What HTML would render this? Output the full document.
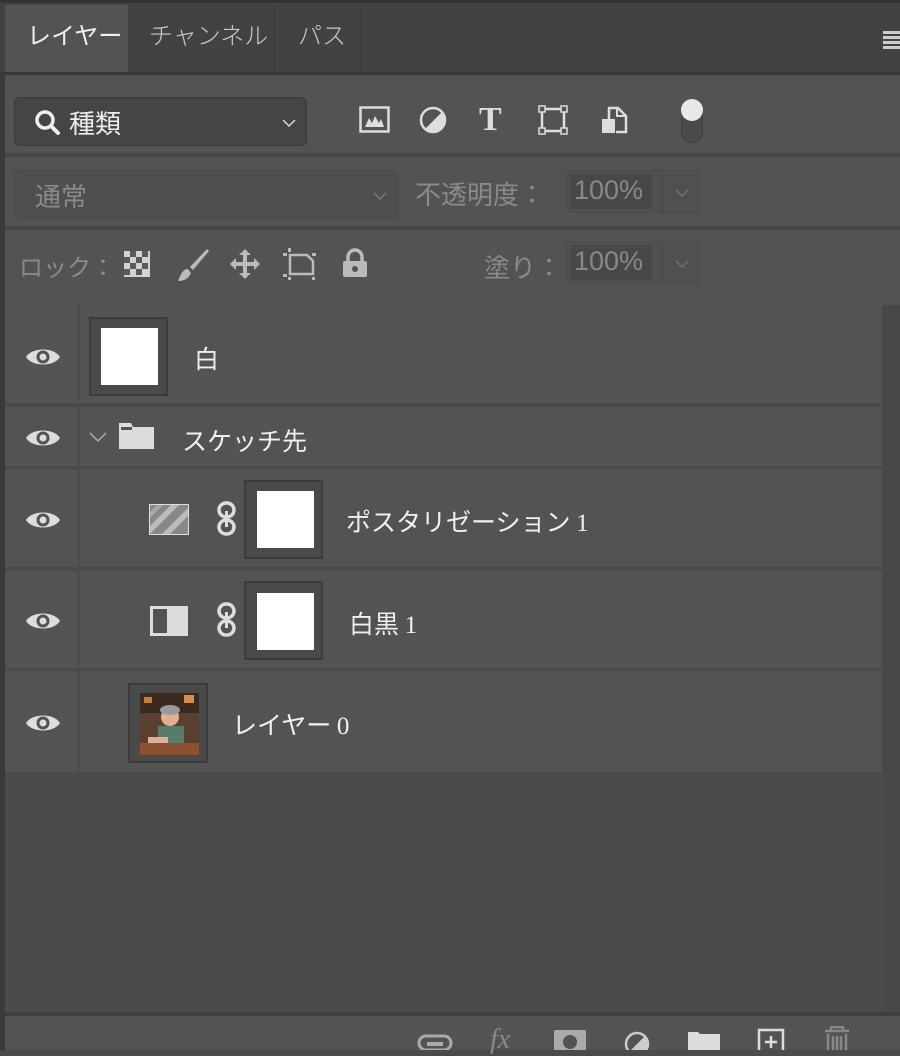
<!DOCTYPE html>
<html><head><meta charset="utf-8">
<style>
*{margin:0;padding:0;box-sizing:border-box}
body{width:900px;height:1050px;background:#4b4b4b;overflow:hidden;position:relative;font-family:"Liberation Sans","Noto Sans CJK JP",sans-serif;}
.a{position:absolute}
.jp{font-family:"Noto Sans CJK JP","Liberation Sans",sans-serif}
</style></head><body>
<div class="a" style="left:0;top:0;width:5px;height:1050px;background:#3a3a3a"></div>
<div class="a" style="left:0;top:0;width:900px;height:73px;background:#424242;border-top:3px solid #333"></div>
<div class="a" style="left:5px;top:5px;width:123px;height:70px;background:#535353"></div>
<div class="a jp" style="left:27px;top:16px;font-size:24px;color:#f0f0f0;font-weight:400">レイヤー</div>
<div class="a jp" style="left:149px;top:16px;font-size:24px;color:#c8c8c8;font-weight:300">チャンネル</div>
<div class="a" style="left:274px;top:5px;width:1px;height:67px;background:#383838"></div>
<div class="a jp" style="left:298px;top:16px;font-size:24px;color:#c8c8c8;font-weight:300">パス</div>
<div class="a" style="left:360px;top:5px;width:1px;height:67px;background:#383838"></div>
<div class="a" style="left:883px;top:31px;width:17px;height:3px;background:#ccc;box-shadow:0 5px 0 #ccc,0 10px 0 #ccc,0 15px 0 #ccc"></div>
<div class="a" style="left:0;top:72px;width:900px;height:3px;background:#383838"></div>
<div class="a" style="left:5px;top:75px;width:895px;height:78px;background:#535353"></div>
<div class="a" style="left:14px;top:97px;width:293px;height:49px;background:#454545;border:1px solid #3c3c3c;border-radius:5px"></div>
<svg class="a" style="left:33px;top:108px" width="30" height="30" viewBox="0 0 30 30"><circle cx="12" cy="12" r="8" fill="none" stroke="#eee" stroke-width="3.5"/><path d="M18 18l7 7" stroke="#eee" stroke-width="4" stroke-linecap="round"/></svg>
<div class="a jp" style="left:69px;top:104px;font-size:26px;color:#eee">種類</div>
<svg class="a" style="left:281px;top:118px" width="16" height="10"><path d="M2 2l6 6 6-6" fill="none" stroke="#ddd" stroke-width="1.5"/></svg>
<svg class="a" style="left:359px;top:106px" width="32" height="28"><rect x="1.5" y="1.5" width="28" height="24" fill="none" stroke="#ddd" stroke-width="2.5"/><path d="M6 21l4-9 3 5 3-7 4 7 2-4 3 8z" fill="#ddd"/></svg>
<svg class="a" style="left:419px;top:106px" width="28" height="28"><circle cx="14" cy="14" r="12" fill="none" stroke="#ddd" stroke-width="2.5"/><path d="M23 6A12 12 0 0 1 6 23z" fill="#ddd"/></svg>
<div class="a" style="left:479px;top:101px;font-family:'Liberation Serif',serif;font-weight:bold;font-size:34px;color:#ddd">T</div>
<svg class="a" style="left:538px;top:105px" width="30" height="30"><rect x="4" y="4" width="22" height="22" fill="none" stroke="#ddd" stroke-width="2.5"/><g fill="#535353" stroke="#ddd" stroke-width="1.5"><rect x="1" y="1" width="6" height="6"/><rect x="23" y="1" width="6" height="6"/><rect x="1" y="23" width="6" height="6"/><rect x="23" y="23" width="6" height="6"/></g></svg>
<svg class="a" style="left:600px;top:105px" width="30" height="30"><path d="M9 15V3h9l8 8v16H16" fill="none" stroke="#ddd" stroke-width="2.5"/><path d="M17 3v8h8" fill="none" stroke="#ddd" stroke-width="2"/><rect x="2" y="14" width="13" height="14" fill="#ddd"/></svg>
<div class="a" style="left:681px;top:100px;width:22px;height:43px;border:1px solid #3d3d3d;border-radius:11px;background:#4a4a4a"></div>
<div class="a" style="left:681px;top:99px;width:22px;height:22px;border-radius:50%;background:#e8e8e8"></div>
<div class="a" style="left:5px;top:153px;width:895px;height:4px;background:#464646"></div>
<div class="a" style="left:5px;top:157px;width:895px;height:69px;background:#535353"></div>
<div class="a" style="left:14px;top:170px;width:384px;height:49px;background:#4f4f4f;border:1px solid #4a4a4a;border-radius:5px"></div>
<div class="a jp" style="left:35px;top:177px;font-size:26px;color:#8a8a8a">通常</div>
<svg class="a" style="left:372px;top:191px" width="16" height="10"><path d="M2 2l6 6 6-6" fill="none" stroke="#777" stroke-width="1.5"/></svg>
<div class="a jp" style="left:415px;top:175px;font-size:26px;color:#8a8a8a">不透明度：</div>
<div class="a" style="left:567px;top:170px;width:132px;height:43px;border:1px solid #4a4a4a;border-radius:4px;background:#505050"></div>
<div class="a" style="left:571px;top:174px;width:81px;height:35px;background:#484848"></div>
<div class="a" style="left:662px;top:171px;width:1px;height:44px;background:#484848"></div>
<div class="a" style="left:574px;top:175px;font-size:27px;color:#888">100%</div>
<svg class="a" style="left:674px;top:188px" width="16" height="10"><path d="M2 2l6 6 6-6" fill="none" stroke="#707070" stroke-width="1.5"/></svg>
<div class="a" style="left:5px;top:226px;width:895px;height:4px;background:#464646"></div>
<div class="a" style="left:5px;top:230px;width:895px;height:75px;background:#535353"></div>
<div class="a jp" style="left:19px;top:248px;font-size:24px;color:#8a8a8a">ロック：</div>
<svg class="a" style="left:123px;top:250px" width="28" height="28"><rect x="1" y="1" width="26" height="26" fill="#e0e0e0" opacity=".9"/><g fill="#5a5a5a"><rect x="7" y="1" width="6" height="6"/><rect x="19" y="1" width="6" height="6"/><rect x="1" y="7" width="6" height="6"/><rect x="13" y="7" width="6" height="6"/><rect x="7" y="13" width="6" height="6"/><rect x="19" y="13" width="6" height="6"/><rect x="1" y="19" width="6" height="6"/><rect x="13" y="19" width="6" height="6"/></g></svg>
<svg class="a" style="left:176px;top:247px" width="34" height="36"><path d="M31 2L14 20l3 3L33 4z" fill="#bbb"/><path d="M12 22c-5 0-7 5-10 12 7 0 11-3 13-8z" fill="#bbb"/></svg>
<svg class="a" style="left:228px;top:247px" width="34" height="34"><path d="M17 2l6 6h-4v7h7v-4l6 6-6 6v-4h-7v7h4l-6 6-6-6h4v-7H8v4l-6-6 6-6v4h7V8h-4z" fill="#bbb"/></svg>
<svg class="a" style="left:282px;top:247px" width="36" height="34"><path d="M8 8h17l6 6v13H8z" fill="none" stroke="#bbb" stroke-width="2.5"/><g fill="#bbb"><rect x="1" y="6" width="4" height="3"/><rect x="6" y="1" width="3" height="4"/><rect x="30" y="6" width="4" height="3"/><rect x="1" y="27" width="4" height="3"/><rect x="6" y="30" width="3" height="3"/><rect x="30" y="30" width="3" height="3"/></g></svg>
<svg class="a" style="left:341px;top:248px" width="28" height="30"><path d="M7 13V9a7 7 0 0 1 14 0v4" fill="none" stroke="#bbb" stroke-width="3.5"/><rect x="2" y="13" width="24" height="16" rx="2" fill="#bbb"/><circle cx="14" cy="21" r="3" fill="#535353"/></svg>
<div class="a jp" style="left:484px;top:248px;font-size:26px;color:#8a8a8a">塗り：</div>
<div class="a" style="left:567px;top:241px;width:132px;height:43px;border:1px solid #4a4a4a;border-radius:4px;background:#505050"></div>
<div class="a" style="left:571px;top:245px;width:81px;height:35px;background:#484848"></div>
<div class="a" style="left:662px;top:242px;width:1px;height:44px;background:#484848"></div>
<div class="a" style="left:574px;top:246px;font-size:27px;color:#888">100%</div>
<svg class="a" style="left:674px;top:259px" width="16" height="10"><path d="M2 2l6 6 6-6" fill="none" stroke="#707070" stroke-width="1.5"/></svg>
<div class="a" style="left:882px;top:305px;width:18px;height:710px;background:#484848"></div>
<div class="a" style="left:5px;top:305px;width:877px;height:467px;background:#4a4a4a"></div>
<div class="a" style="left:5px;top:305px;width:877px;height:98px;background:#545454"></div>
<div class="a" style="left:5px;top:407px;width:877px;height:59px;background:#535353"></div>
<div class="a" style="left:5px;top:469px;width:877px;height:98px;background:#535353"></div>
<div class="a" style="left:5px;top:571px;width:877px;height:97px;background:#535353"></div>
<div class="a" style="left:5px;top:671px;width:877px;height:101px;background:#535353"></div>
<div class="a" style="left:78px;top:305px;width:2px;height:467px;background:#4c4c4c"></div>
<svg width="0" height="0" style="position:absolute"><defs><g id="eye"><path d="M0 11C6 1 28 1 34 11C28 21 6 21 0 11z" fill="#ddd"/><circle cx="17" cy="11" r="6.5" fill="#535353"/><circle cx="17" cy="11" r="3.5" fill="#ddd"/></g></defs></svg>
<svg class="a" style="left:26px;top:346px" width="34" height="22"><use href="#eye"/></svg>
<svg class="a" style="left:26px;top:427px" width="34" height="22"><use href="#eye"/></svg>
<svg class="a" style="left:26px;top:509px" width="34" height="22"><use href="#eye"/></svg>
<svg class="a" style="left:26px;top:610px" width="34" height="22"><use href="#eye"/></svg>
<svg class="a" style="left:26px;top:712px" width="34" height="22"><use href="#eye"/></svg>
<div class="a" style="left:89px;top:317px;width:79px;height:79px;border:2px solid #3c3c3c;background:#4a4a4a"></div>
<div class="a" style="left:101px;top:328px;width:57px;height:57px;background:#fff"></div>
<div class="a jp" style="left:194px;top:340px;font-size:25px;color:#f0f0f0">白</div>
<svg class="a" style="left:88px;top:430px" width="20" height="14"><path d="M2 3l8 8 8-8" fill="none" stroke="#aaa" stroke-width="1.5"/></svg>
<svg class="a" style="left:118px;top:421px" width="38" height="30"><path d="M1 2h12l2 4h21v22H1z" fill="#ddd"/><path d="M3 6h11v3H3z" fill="#535353"/></svg>
<div class="a jp" style="left:182px;top:422px;font-size:25px;color:#f0f0f0">スケッチ先</div>
<svg class="a" style="left:148px;top:503px" width="42" height="33"><defs><clipPath id="c"><rect x="2" y="2" width="38" height="29"/></clipPath></defs><rect x="1" y="1" width="40" height="31" fill="#ddd"/><g clip-path="url(#c)"><rect x="2" y="2" width="38" height="29" fill="#888"/><path d="M-5 30L25 0h8L3 30z" fill="#bbb"/><path d="M12 33L42 3v8L20 33z" fill="#bbb"/><path d="M-5 16L11 0h6L-5 22z" fill="#aaa"/></g></svg>
<svg class="a" style="left:216px;top:500px" width="22" height="38"><rect x="3" y="3" width="15" height="14" rx="7" fill="none" stroke="#ddd" stroke-width="3.5"/><rect x="3" y="20" width="15" height="14" rx="7" fill="none" stroke="#ddd" stroke-width="3.5"/><rect x="9" y="11" width="3" height="16" fill="#ddd"/></svg>
<div class="a" style="left:244px;top:480px;width:79px;height:79px;border:2px solid #3c3c3c;background:#4a4a4a"></div>
<div class="a" style="left:257px;top:491px;width:57px;height:57px;background:#fff"></div>
<div class="a jp" style="left:346px;top:503px;font-size:25px;color:#f0f0f0">ポスタリゼーション <span style="font-family:'Liberation Serif',serif">1</span></div>
<svg class="a" style="left:148px;top:604px" width="42" height="34"><rect x="2" y="2" width="38" height="30" fill="#ddd"/><rect x="5" y="5" width="14" height="24" fill="#535353"/></svg>
<svg class="a" style="left:216px;top:601px" width="22" height="38"><rect x="3" y="3" width="15" height="14" rx="7" fill="none" stroke="#ddd" stroke-width="3.5"/><rect x="3" y="20" width="15" height="14" rx="7" fill="none" stroke="#ddd" stroke-width="3.5"/><rect x="9" y="11" width="3" height="16" fill="#ddd"/></svg>
<div class="a" style="left:244px;top:581px;width:79px;height:79px;border:2px solid #3c3c3c;background:#4a4a4a"></div>
<div class="a" style="left:257px;top:593px;width:57px;height:57px;background:#fff"></div>
<div class="a jp" style="left:349px;top:605px;font-size:25px;color:#f0f0f0">白黒 <span style="font-family:'Liberation Serif',serif">1</span></div>
<div class="a" style="left:128px;top:683px;width:80px;height:80px;border:2px solid #3c3c3c;background:#4a4a4a"></div>
<svg class="a" style="left:140px;top:693px" width="59" height="62"><rect width="59" height="62" fill="#5a4030"/><rect x="0" y="0" width="59" height="20" fill="#3a2a20"/><rect x="4" y="4" width="8" height="6" fill="#c08040"/><rect x="44" y="2" width="10" height="8" fill="#d09050"/><circle cx="30" cy="24" r="9" fill="#e0b090"/><ellipse cx="30" cy="17" rx="10" ry="5" fill="#9a9a9a"/><rect x="18" y="33" width="26" height="22" fill="#5a7a6a"/><rect x="0" y="50" width="59" height="12" fill="#8a5030"/><rect x="8" y="44" width="20" height="6" fill="#e0b090"/></svg>
<div class="a jp" style="left:232px;top:706px;font-size:25px;color:#f0f0f0">レイヤー <span style="font-family:'Liberation Serif',serif">0</span></div>
<div class="a" style="left:5px;top:1012px;width:895px;height:4px;background:#3f3f3f"></div>
<div class="a" style="left:5px;top:1016px;width:895px;height:34px;background:#535353"></div>
<svg class="a" style="left:417px;top:1030px" width="36" height="20"><rect x="2" y="6" width="32" height="14" rx="7" fill="none" stroke="#aaa" stroke-width="3"/><rect x="10" y="12" width="16" height="4" fill="#aaa"/></svg>
<div class="a" style="left:490px;top:1024px;font-family:'Liberation Serif',serif;font-style:italic;font-size:28px;color:#888">fx</div>
<svg class="a" style="left:554px;top:1030px" width="32" height="20"><rect x="0" y="0" width="32" height="22" rx="2" fill="#aaa"/><circle cx="16" cy="12" r="7" fill="#535353"/></svg>
<svg class="a" style="left:623px;top:1030px" width="28" height="20"><circle cx="14" cy="14" r="11" fill="none" stroke="#ccc" stroke-width="2.5"/><path d="M22 6A11 11 0 0 1 6 22z" fill="#ccc"/></svg>
<svg class="a" style="left:688px;top:1029px" width="32" height="21"><path d="M0 3h10l2 2h20v20H0z" fill="#ddd"/></svg>
<svg class="a" style="left:757px;top:1028px" width="28" height="22"><rect x="2" y="2" width="24" height="24" fill="none" stroke="#ddd" stroke-width="2.5"/><path d="M14 8v12M8 14h12" stroke="#ddd" stroke-width="2.5"/></svg>
<svg class="a" style="left:822px;top:1026px" width="30" height="24"><path d="M9 4V1h12v3M3 5h24M6 8v18h18V8M11 10v14M15 10v14M19 10v14" fill="none" stroke="#888" stroke-width="2.5"/></svg>
</body></html>
